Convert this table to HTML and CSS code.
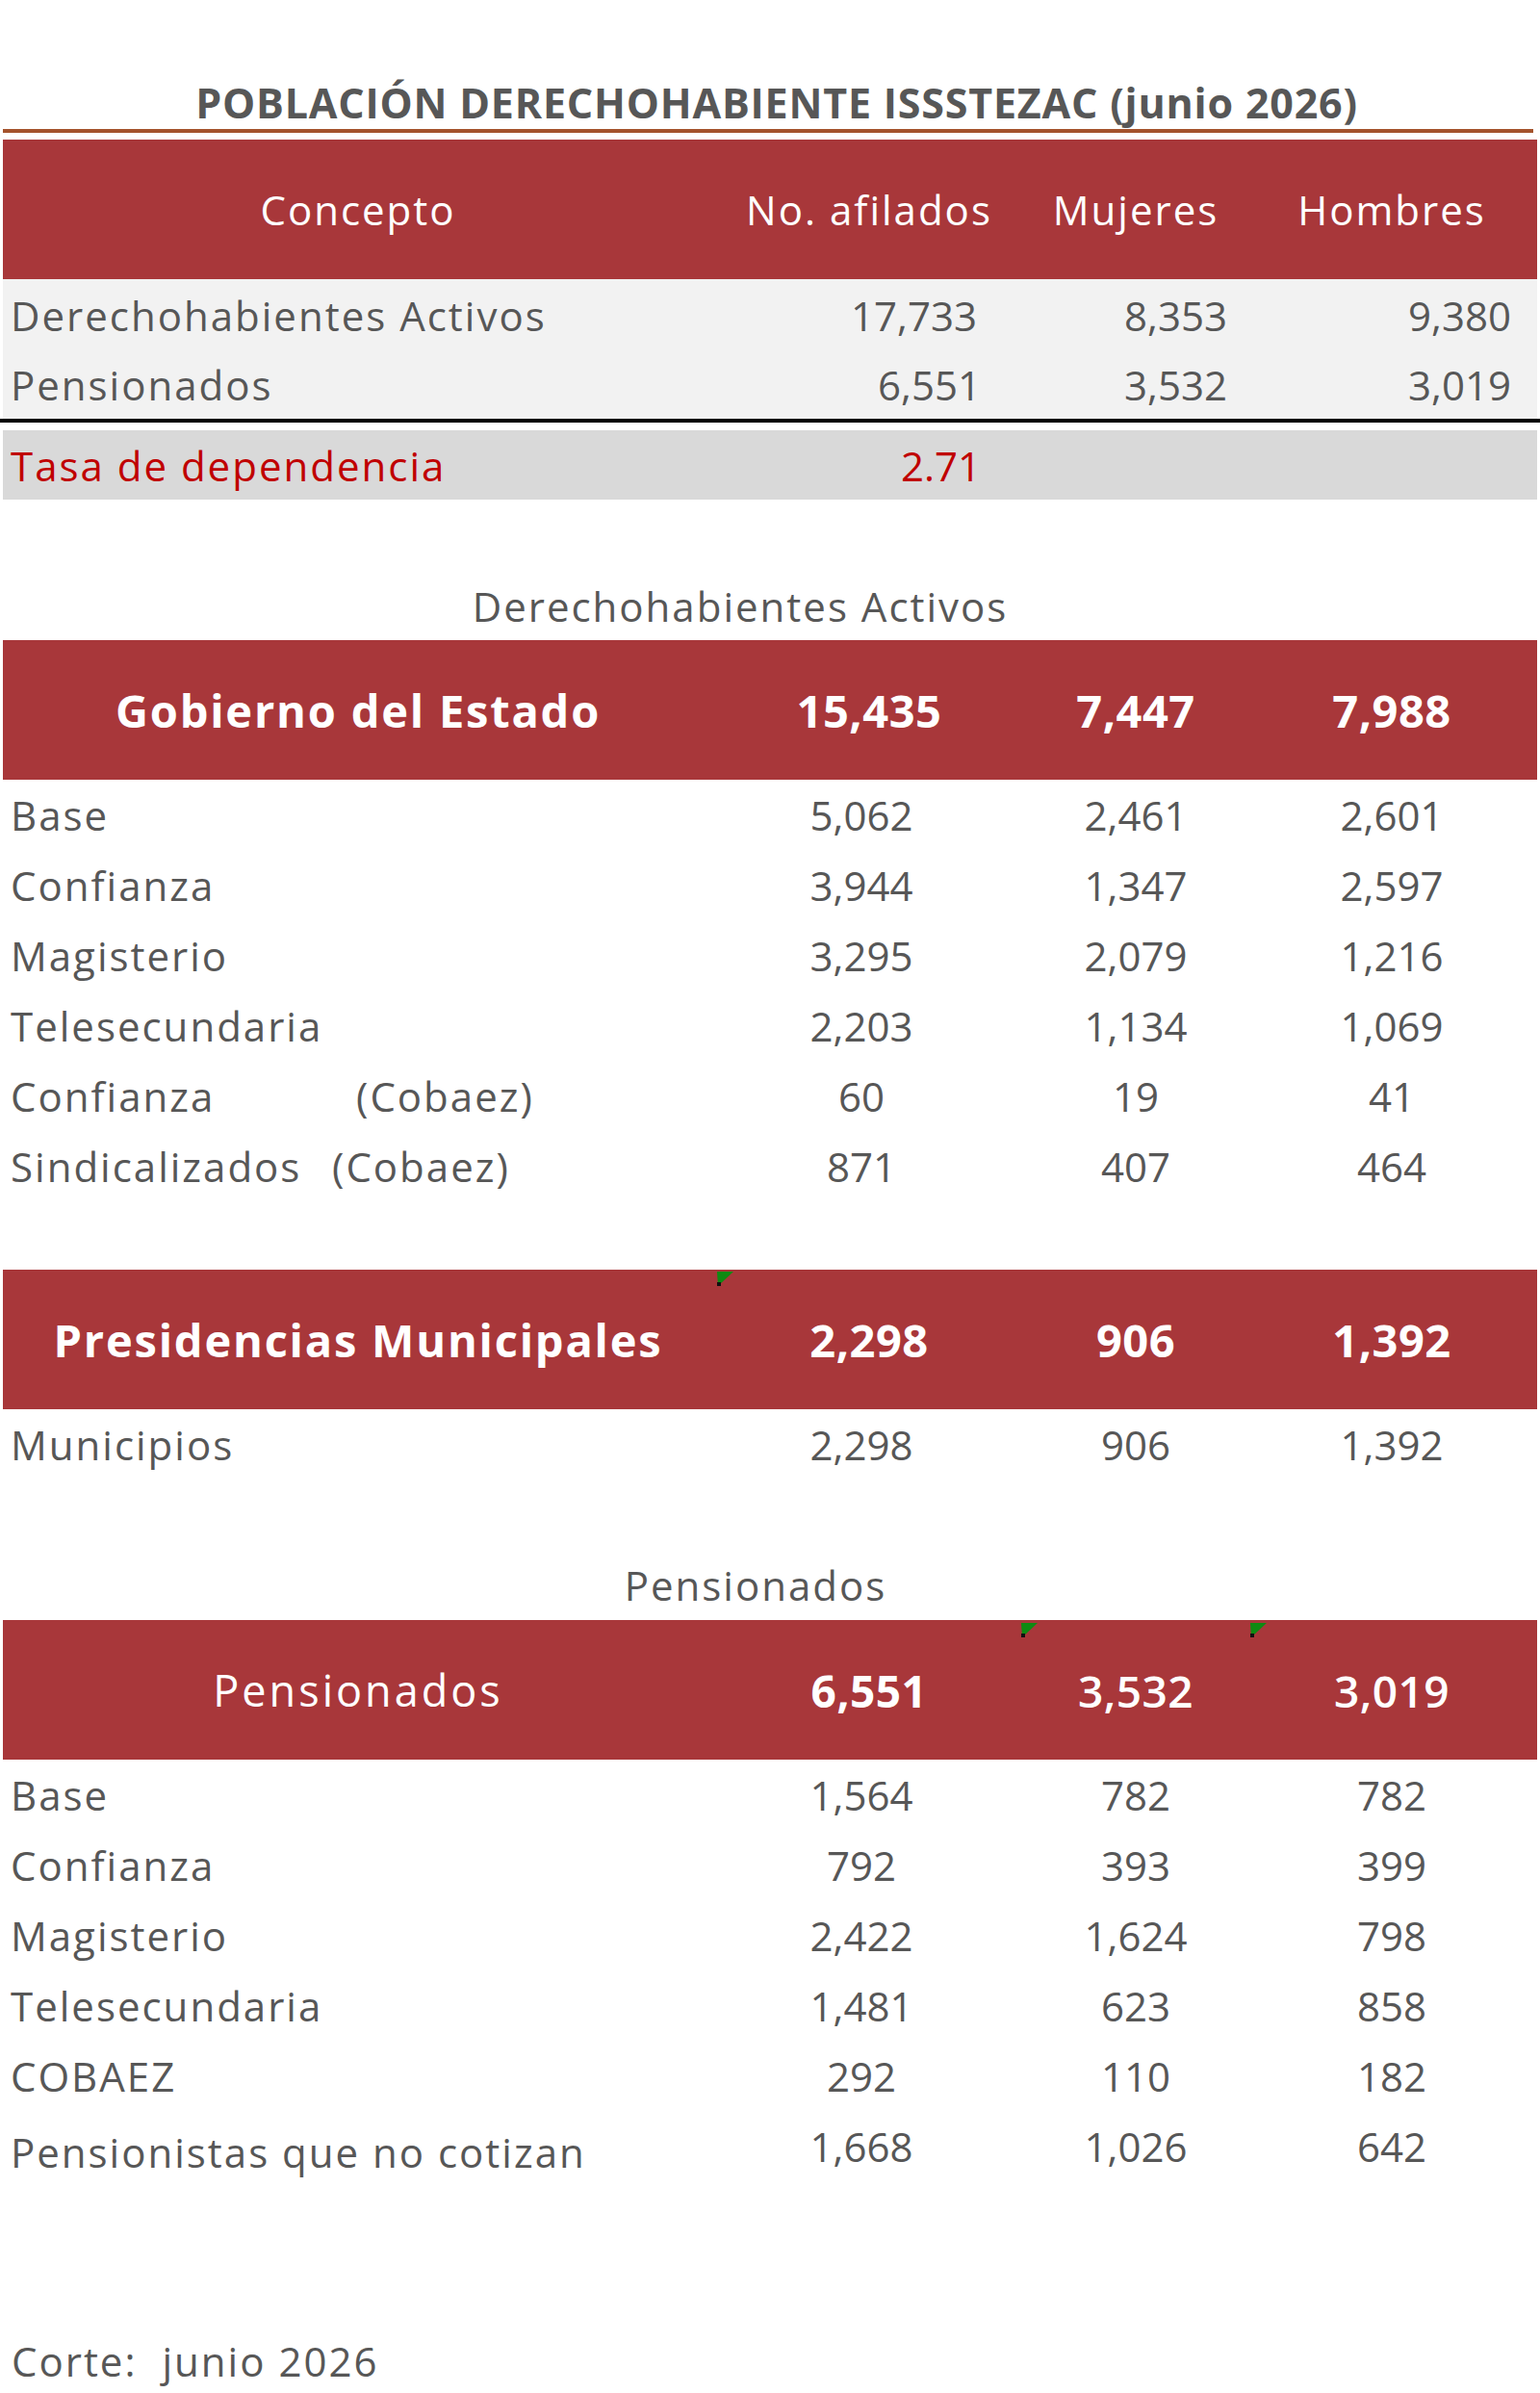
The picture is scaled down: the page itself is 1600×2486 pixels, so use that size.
FILE: index.html
```html
<!DOCTYPE html>
<html lang="es">
<head>
<meta charset="utf-8">
<title>Población derechohabiente ISSSTEZAC</title>
<link rel="stylesheet" href="styles.css">
</head>
<body>
<main class="sheet">
  <h1 class="title">POBLACIÓN DERECHOHABIENTE ISSSTEZAC (junio 2026)</h1>
  <div class="rule-orange"></div>

  <div class="row head head-main">
    <div class="cell">Concepto</div>
    <div class="cell">No. afilados</div>
    <div class="cell">Mujeres</div>
    <div class="cell">Hombres</div>
  </div>

  <div class="summary">
    <div class="row srow">
      <div class="label">Derechohabientes Activos</div>
      <div class="rnum r2">17,733</div>
      <div class="rnum r3">8,353</div>
      <div class="rnum r4">9,380</div>
    </div>
    <div class="row srow">
      <div class="label">Pensionados</div>
      <div class="rnum r2 r2b">6,551</div>
      <div class="rnum r3">3,532</div>
      <div class="rnum r4">3,019</div>
    </div>
  </div>
  <div class="rule-black"></div>

  <div class="row rate">
    <div class="label">Tasa de dependencia</div>
    <div class="rnum r2 r2b">2.71</div>
    <div></div>
    <div></div>
  </div>

  <h2 class="subtitle sub-activos">Derechohabientes Activos</h2>

  <div class="row head head-bold">
    <div class="cell">Gobierno del Estado</div>
    <div class="cell">15,435</div>
    <div class="cell">7,447</div>
    <div class="cell">7,988</div>
  </div>
  <div class="row drow"><div class="label">Base</div><div class="num n2">5,062</div><div class="num">2,461</div><div class="num">2,601</div></div>
  <div class="row drow"><div class="label">Confianza</div><div class="num n2">3,944</div><div class="num">1,347</div><div class="num">2,597</div></div>
  <div class="row drow"><div class="label">Magisterio</div><div class="num n2">3,295</div><div class="num">2,079</div><div class="num">1,216</div></div>
  <div class="row drow"><div class="label">Telesecundaria</div><div class="num n2">2,203</div><div class="num">1,134</div><div class="num">1,069</div></div>
  <div class="row drow"><div class="label"><span class="lead lead-conf">Confianza</span>(Cobaez)</div><div class="num n2">60</div><div class="num">19</div><div class="num">41</div></div>
  <div class="row drow"><div class="label"><span class="lead lead-sind">Sindicalizados</span>(Cobaez)</div><div class="num n2">871</div><div class="num">407</div><div class="num">464</div></div>

  <div class="row head head-bold head-muni">
    <div class="cell">Presidencias Municipales</div>
    <div class="cell">2,298</div>
    <div class="cell">906</div>
    <div class="cell">1,392</div>
    <svg class="mark mark-muni" viewBox="0 0 17 15" aria-hidden="true"><polygon points="0,0 17,0 1,15" fill="#0f8a12"/><rect x="0" y="11" width="4" height="4" fill="#111"/></svg>
  </div>
  <div class="row drow"><div class="label">Municipios</div><div class="num n2">2,298</div><div class="num">906</div><div class="num">1,392</div></div>

  <h2 class="subtitle sub-pens">Pensionados</h2>

  <div class="row head head-pens">
    <div class="cell">Pensionados</div>
    <div class="cell strong">6,551</div>
    <div class="cell semi">3,532</div>
    <div class="cell semi">3,019</div>
    <svg class="mark mark-p1" viewBox="0 0 17 15" aria-hidden="true"><polygon points="0,0 17,0 1,15" fill="#0f8a12"/><rect x="0" y="11" width="4" height="4" fill="#111"/></svg>
    <svg class="mark mark-p2" viewBox="0 0 17 15" aria-hidden="true"><polygon points="0,0 17,0 1,15" fill="#0f8a12"/><rect x="0" y="11" width="4" height="4" fill="#111"/></svg>
  </div>
  <div class="row drow"><div class="label">Base</div><div class="num n2">1,564</div><div class="num">782</div><div class="num">782</div></div>
  <div class="row drow"><div class="label">Confianza</div><div class="num n2">792</div><div class="num">393</div><div class="num">399</div></div>
  <div class="row drow"><div class="label">Magisterio</div><div class="num n2">2,422</div><div class="num">1,624</div><div class="num">798</div></div>
  <div class="row drow"><div class="label">Telesecundaria</div><div class="num n2">1,481</div><div class="num">623</div><div class="num">858</div></div>
  <div class="row drow"><div class="label">COBAEZ</div><div class="num n2">292</div><div class="num">110</div><div class="num">182</div></div>
  <div class="row drow"><div class="label label-low">Pensionistas que no cotizan</div><div class="num n2">1,668</div><div class="num">1,026</div><div class="num">642</div></div>

  <p class="corte"><span>Corte:</span><span class="corte-date">junio 2026</span></p>
</main>
</body>
</html>
```

FILE: styles.css
```css
* { box-sizing: border-box; }

html, body {
  margin: 0;
  padding: 0;
  background: #ffffff;
}

body {
  font-family: "Open Sans", "Liberation Sans", sans-serif;
  color: #575757;
}

.sheet {
  width: 1600px;
  padding: 0 3px 8px;
}

.title {
  margin: 0;
  padding: 82px 0 0 14px;
  height: 132px;
  line-height: 50px;
  text-align: center;
  font-size: 43px;
  font-weight: 700;
  letter-spacing: 0.8px;
  color: #575757;
}

.rule-orange {
  height: 4px;
  margin: 2px 4px 0 0;
  background: #a4532c;
}

.row {
  display: grid;
  grid-template-columns: 738px 324px 230px 302px;
  align-items: center;
}

/* red header bars */
.head {
  position: relative;
  height: 145px;
  background: #a8373a;
  color: #ffffff;
}

.head .cell {
  text-align: center;
  white-space: nowrap;
}

.head-main {
  margin-top: 7px;
  font-size: 42px;
  letter-spacing: 2px;
}

.head-bold {
  margin-top: 10px;
  font-size: 47px;
  font-weight: 700;
  letter-spacing: 1.8px;
}

.head-bold .cell + .cell {
  letter-spacing: 0.5px;
}

.head-muni {
  margin-top: 71px;
}

.head-pens {
  margin-top: 11px;
  font-size: 45px;
  font-weight: 500;
  letter-spacing: 3px;
}

.head-pens .strong,
.head-pens .semi {
  font-size: 46px;
  letter-spacing: 0.5px;
}

.head-pens .strong { font-weight: 700; }
.head-pens .semi { font-weight: 600; }

.mark {
  position: absolute;
  width: 17px;
  height: 15px;
}

.mark-muni { left: 742px; top: 2px; }
.mark-p1 { left: 1058px; top: 3px; }
.mark-p2 { left: 1296px; top: 3px; }

/* labels and numbers */
.label {
  padding-left: 8px;
  font-size: 42px;
  letter-spacing: 2px;
  white-space: nowrap;
}

.num,
.rnum {
  font-size: 42px;
  white-space: nowrap;
}

.num {
  text-align: center;
}

.num.n2 {
  padding-right: 16px;
}

.rnum {
  text-align: right;
}

.r2 { padding-right: 50px; }
.r2b { padding-right: 46px; }
.r3 { padding-right: 20px; }
.r4 { padding-right: 27px; }

/* summary block */
.summary {
  padding-top: 1px;
  background: #f2f2f2;
}

.srow {
  height: 72px;
}

.rule-black {
  height: 4px;
  margin: 0 -3px;
  background: #000000;
}

.rate {
  height: 72px;
  margin-top: 8px;
  background: #d9d9d9;
  color: #c00000;
}

/* subtitles */
.subtitle {
  margin: 0;
  height: 50px;
  line-height: 50px;
  text-align: center;
  font-size: 42px;
  font-weight: 400;
  letter-spacing: 2px;
  color: #575757;
}

.sub-activos {
  margin-top: 86px;
  padding-right: 62px;
}

.sub-pens {
  margin-top: 85px;
  padding-right: 30px;
}

/* data rows */
.drow {
  height: 73px;
}

.lead {
  display: inline-block;
}

.lead-conf { width: 359px; }
.lead-sind { width: 334px; }

.label-low {
  padding-top: 12px;
}

.corte {
  margin: 162px 0 0;
  padding-left: 9px;
  height: 50px;
  line-height: 50px;
  font-size: 42px;
  letter-spacing: 2px;
  color: #575757;
}

.corte-date {
  margin-left: 26px;
}
```
